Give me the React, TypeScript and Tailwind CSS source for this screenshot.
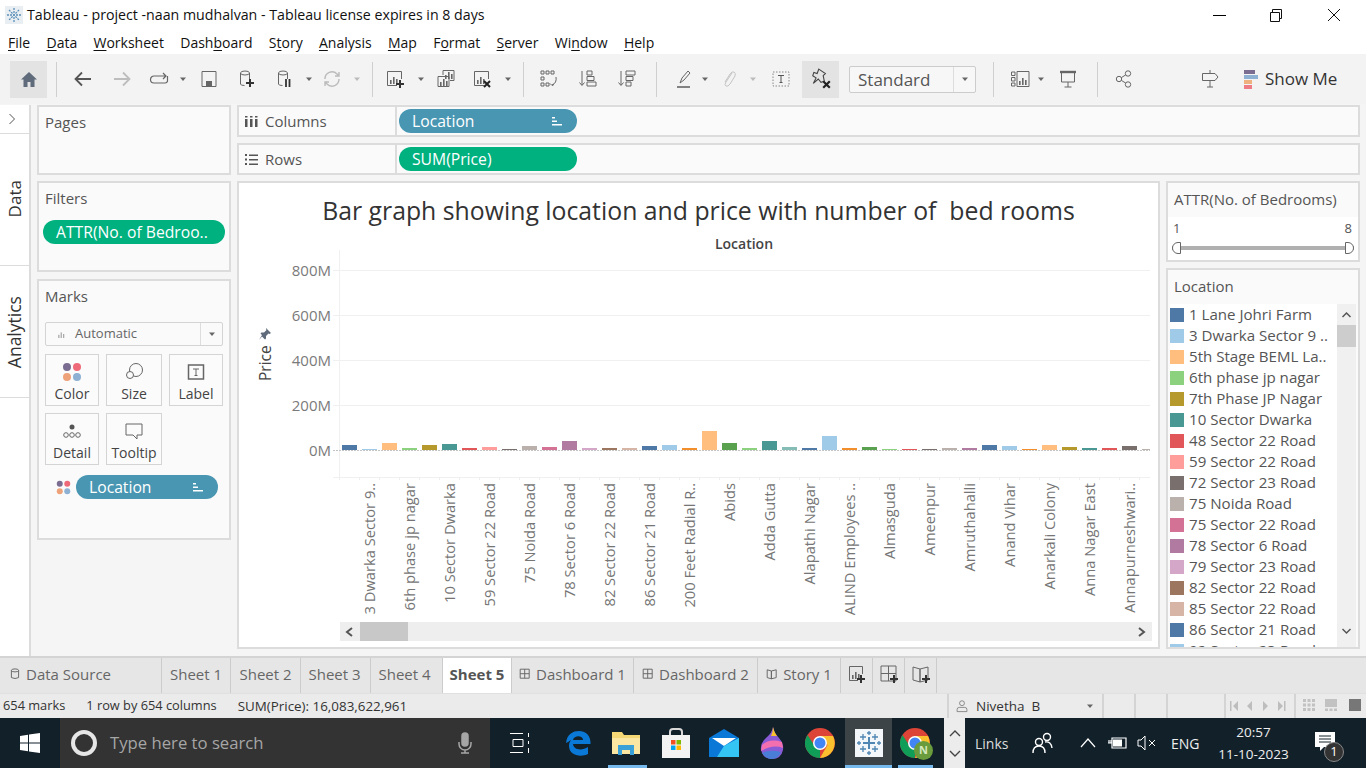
import type { ReactNode } from 'react';

const GREY = '#666666';

const Svg = ({ children, size = 20, className = '' }: { children: ReactNode; size?: number; className?: string }) => (
    <svg width={size} height={size} viewBox="0 0 20 20" fill="none" stroke={GREY} strokeWidth="1" className={`shrink-0 ${className}`}>
        {children}
    </svg>
);

const Caret = ({ className, light }: { className: string; light?: boolean }) => (
    <svg width="8" height="8" viewBox="0 0 8 8" className={`shrink-0 ${className}`}>
        <path d="M1 2.500h6L4 6z" fill={light ? '#bbbbbb' : '#666666'} />
    </svg>
);

const Sep = ({ className }: { className: string }) => <div className={`h-[35px] w-px shrink-0 bg-[#cfcfcf] ${className}`} />;

const MiniBars = ({ x = 4, y = 4, color = GREY }: { x?: number; y?: number; color?: string }) => (
    <g fill={color} stroke="none" transform={`translate(${x} ${y})`}>
        <rect x="0" y="6" width="1.600" height="4" />
        <rect x="3" y="3" width="1.600" height="7" />
        <rect x="6" y="5" width="1.600" height="5" />
    </g>
);

const PlusMark = ({ x, y }: { x: number; y: number }) => (
    <path d={`M${x - 4} ${y}h8M${x} ${y - 4}v8`} stroke="#333333" strokeWidth="2" />
);

const XMark = ({ x, y }: { x: number; y: number }) => (
    <path d={`M${x - 3} ${y - 3}l6 6M${x + 3} ${y - 3}l-6 6`} stroke="#222222" strokeWidth="2" />
);

const Cylinder = () => (
    <>
        <ellipse cx="8" cy="4" rx="4.500" ry="2" />
        <path d="M3.500 4v11q0 1.500 4 1.500M12.500 4v6" />
    </>
);

const menus: [string, string, string][] = [
    ['', 'F', 'ile'],
    ['', 'D', 'ata'],
    ['', 'W', 'orksheet'],
    ['Dash', 'b', 'oard'],
    ['S', 't', 'ory'],
    ['', 'A', 'nalysis'],
    ['', 'M', 'ap'],
    ['F', 'o', 'rmat'],
    ['', 'S', 'erver'],
    ['Wi', 'n', 'dow'],
    ['', 'H', 'elp'],
];

const TitleBar = () => (
    <div className="flex h-[30px] items-center bg-white">
        <svg width="18" height="18" viewBox="0 0 18 18" className="ml-[5px]">
            <rect width="18" height="18" fill="#e8eef2" />
            <path d="M9 2v14M2 9h14M4 4l10 10M14 4L4 14" stroke="#5b8fb9" strokeWidth="1.300" strokeDasharray="2 1" />
        </svg>
        <div className="ml-[4px] text-[14.200px] text-[#111111]">Tableau - project -naan mudhalvan - Tableau license expires in 8 days</div>
        <div className="ml-auto flex items-center">
            <div className="h-px w-[13px] bg-black" />
            <svg width="14" height="14" viewBox="0 0 14 14" fill="none" stroke="#111111" className="ml-[43px]">
                <path d="M1.500 4.500h9v9h-9zM3.500 4.500v-3h9v9h-2" />
            </svg>
            <svg width="14" height="14" viewBox="0 0 14 14" fill="none" stroke="#111111" className="ml-[44px] mr-[25px]">
                <path d="M1 1l12 12M13 1L1 13" />
            </svg>
        </div>
    </div>
);

const MenuBar = () => (
    <div className="flex h-[24px] items-center gap-[16.300px] bg-white pl-[8px] text-[14px] text-[#111111]">
        {menus.map(([a, u, b]) => (
            <span key={a + u + b}>
                {a}
                <span className="underline underline-offset-2">{u}</span>
                {b}
            </span>
        ))}
    </div>
);

const Toolbar = () => (
    <div className="flex h-[50px] items-center bg-[#f3f3f3] pl-[10px]">
        <div className="flex h-[37px] w-[37px] shrink-0 items-center justify-center bg-[#e3e3e3]">
            <svg width="18" height="17" viewBox="0 0 18 17"><path d="M9 1L1 8.500h2.500V16h4v-5h3v5h4V8.500H17z" fill="#5f6b7a" /></svg>
        </div>
        <Sep className="ml-[9px]" />
        <Svg className="ml-[16px]"><path d="M18 10H3M9 3.500L2.500 10 9 16.500" strokeWidth="1.800" stroke="#555555" /></Svg>
        <Svg className="ml-[19px]"><path d="M2 10h15M11 3.500l6.500 6.500-6.500 6.500" strokeWidth="1.800" stroke="#bdbdbd" /></Svg>
        <Svg className="ml-[17px]"><path d="M17 7H5a3.500 3.500 0 0 0 0 7h11a2.500 2.500 0 0 0 2.500-3V7M14 4l3 3-3 3" strokeWidth="1.200" /></Svg>
        <Caret className="ml-[10px]" />
        <Svg className="ml-[12px]"><path d="M3 2.500h14v15H3z" /><rect x="7" y="12" width="6" height="5" fill={GREY} stroke="none" /></Svg>
        <Svg className="ml-[18px]"><Cylinder /><PlusMark x={13} y={14} /></Svg>
        <Svg className="ml-[18px]"><Cylinder /><path d="M11 10v8M14.500 10v8" stroke="#333333" strokeWidth="1.800" /></Svg>
        <Caret className="ml-[10px]" />
        <Svg className="ml-[9px]"><g stroke="#bbbbbb" strokeWidth="1.400"><path d="M3 10a7 7 0 0 1 12-5l2 2M17 10a7 7 0 0 1-12 5l-2-2M17 3v4h-4M3 17v-4h4" /></g></Svg>
        <Caret light className="ml-[11px]" />
        <Sep className="ml-[11px]" />
        <Svg className="ml-[13px]"><path d="M11 16.500H1.500v-14h14V10" /><MiniBars x={4} y={5} /><PlusMark x={14} y={15} /></Svg>
        <Caret className="ml-[11px]" />
        <Svg className="ml-[11px]"><path d="M7 6V1.500h11v10h-4" /><path d="M2 7.500h11v10H2z" /><MiniBars x={4} y={7} /><MiniBars x={9} y={0} /></Svg>
        <Svg className="ml-[17px]"><path d="M11 16.500H1.500v-14h14V10" /><MiniBars x={4} y={5} /><XMark x={14} y={15} /></Svg>
        <Caret className="ml-[11px]" />
        <Sep className="ml-[11px]" />
        <Svg className="ml-[15px]"><path d="M2 2h3v3H2zM7 2h3v3H7zM12 2h3v3h-3zM2 8h3v3H2zM2 14h3v3H2zM7 14h3v3H7z" /><path d="M17 8q1 6-4 8M11 14.500l2 2 2-1" /></Svg>
        <Svg className="ml-[19px]"><path d="M4 2v14M1.500 13.500L4 16.500l2.500-3" /><path d="M9 2h5v4H9zM9 7.500h7v4H9zM9 13h9v4H9z" /></Svg>
        <Svg className="ml-[19px]"><path d="M4 2v14M1.500 13.500L4 16.500l2.500-3" /><path d="M9 2h9v4H9zM9 7.500h7v4H9zM9 13h5v4H9z" /></Svg>
        <Sep className="ml-[19px]" />
        <Svg className="ml-[17px]"><path d="M6 14l2-5 6-7 2 2-6 7z" /><path d="M3 18h13" strokeWidth="1.600" /></Svg>
        <Caret className="ml-[7px]" />
        <Svg className="ml-[10px]"><path d="M13 4l-6 9q-2 3 0 4t4-2l5-8q1-3-1-4t-4 2l-5 8" stroke="#c4c4c4" /></Svg>
        <Caret light className="ml-[10px]" />
        <Svg className="ml-[14px]"><path d="M2 3h16v14H2z" strokeDasharray="1.500 1.500" stroke="#888888" /><path d="M7 6.500h6M10 6.500v7M8.500 13.500h3" stroke="#555555" /></Svg>
        <div className="ml-[11px] flex h-[37px] w-[37px] shrink-0 items-center justify-center bg-[#e3e3e3]">
            <Svg size={22}><path d="M8 1l6 4-2 2 1 5-3 1-2.500-3L3 14l2.500-5-3-2 1-3 3 1z" stroke="#444444" /><XMark x={15} y={15} /></Svg>
        </div>
        <div className="ml-[10px] flex h-[27px] w-[127px] shrink-0 items-center rounded-[2px] border border-[#cccccc] bg-[#f7f7f7] pl-[8px] text-[17px] text-[#555555]">
            <span className="flex-1 pt-px">Standard</span>
            <div className="flex h-full w-[22px] items-center justify-center border-l border-[#dddddd]"><Caret className="" /></div>
        </div>
        <Sep className="ml-[17px]" />
        <Svg className="ml-[16px]"><path d="M1.500 3h3.500v3.500H1.500zM1.500 8.500h3.500V12H1.500zM1.500 14h3.500v3H1.500zM7 2.500h12v15H7z" /><MiniBars x={9} y={6} /></Svg>
        <Caret className="ml-[7px]" />
        <Svg className="ml-[13px]"><path d="M2 3h16" strokeWidth="2.400" /><path d="M3.500 4v9h13V4M10 13v5M6.500 18h7" /></Svg>
        <Sep className="ml-[19px]" />
        <Svg className="ml-[16px]"><circle cx="14" cy="4.500" r="2.700" /><circle cx="5" cy="10" r="2.700" /><circle cx="14" cy="15.500" r="2.700" /><path d="M7.400 8.600l4.300-2.700M7.400 11.400l4.300 2.700" /></Svg>
        <Svg className="ml-[66px]"><path d="M10 1v3M2.500 4.500H15l3 3.500-3 3.500H2.500zM10 11.500V18M7 18h6" /></Svg>
        <div className="ml-[24px] flex w-[14px] shrink-0 flex-col">
            <div className="h-[4px] w-[11px] bg-[#7b6c91]" />
            <div className="mt-[1px] h-[4px] w-[14px] bg-[#8db0d3]" />
            <div className="mt-[1px] h-[4px] w-[8px] bg-[#eeb07e]" />
            <div className="mt-[1px] h-[4px] w-[8px] bg-[#ee7c86]" />
        </div>
        <div className="ml-[7px] whitespace-nowrap text-[17px] text-[#333333]">Show Me</div>
    </div>
);

const Panel = ({ title, className, children }: { title: string; className: string; children?: ReactNode }) => (
    <div className={`shrink-0 border-2 border-[#dcdcdc] bg-[#fafafa] ${className}`}>
        <div className="pl-[6px] pt-[5px] text-[15px] leading-[20px] text-[#555555]">{title}</div>
        {children}
    </div>
);

const SortMark = () => (
    <svg width="10" height="10" viewBox="0 0 10 10" className="shrink-0">
        <path d="M0 1h3v1.500H0zM0 4.500h5V6H0zM0 8h10v1.500H0z" fill="#ffffff" />
    </svg>
);

const Pill = ({ label, className, sort }: { label: string; className: string; sort?: boolean }) => (
    <div className={`flex h-[24px] shrink-0 items-center rounded-full pl-[13px] pr-[15px] text-[15.700px] text-white ${className}`}>
        <span className="flex-1 whitespace-nowrap pt-[2px]">{label}</span>
        {sort && <SortMark />}
    </div>
);

const MarkCard = ({ label, icon, className }: { label: string; icon: ReactNode; className: string }) => (
    <div className={`flex h-[52px] flex-col items-center border border-[#d4d4d4] bg-[#fbfbfb] pt-[7px] text-[14px] text-[#444444] ${className}`}>
        <div className="flex h-[20px] items-center">{icon}</div>
        <div className="mt-[3px] leading-[18px]">{label}</div>
    </div>
);

const ColorDots = ({ size = 20 }: { size?: number }) => (
    <svg width={size} height={size} viewBox="0 0 20 20">
        <circle cx="5" cy="5" r="4" fill="#7b6c91" />
        <circle cx="15" cy="5" r="4" fill="#ee6a78" />
        <circle cx="5" cy="15" r="4" fill="#eea27a" />
        <circle cx="15" cy="15" r="4" fill="#8db0d3" />
    </svg>
);

const Rail = () => (
    <div className="flex w-[31px] shrink-0 flex-col border-r-2 border-[#dcdcdc] bg-white text-[#333333]">
        <div className="flex h-[29px] items-center justify-start border-b border-[#dcdcdc] pl-[8px]">
            <svg width="8" height="12" viewBox="0 0 8 12" fill="none" stroke="#555555"><path d="M1.500 1l5 5-5 5" /></svg>
        </div>
        <div className="flex h-[132px] items-center justify-center border-b border-[#dcdcdc] pb-[2px]">
            <span className="-rotate-90 whitespace-nowrap text-[17px]">Data</span>
        </div>
        <div className="flex h-[132px] items-center justify-center border-b border-[#dcdcdc] pt-[2px]">
            <span className="-rotate-90 whitespace-nowrap text-[17.500px]">Analytics</span>
        </div>
    </div>
);

const LeftPanels = () => (
    <div className="ml-[6px] flex w-[194px] shrink-0 flex-col">
        <Panel title="Pages" className="h-[70px]" />
        <Panel title="Filters" className="mt-[6px] h-[91px]">
            <Pill label="ATTR(No. of Bedroo.." className="ml-[4px] mt-[12px] w-[182px] bg-[#00b180]" />
        </Panel>
        <Panel title="Marks" className="mt-[7px] h-[261px]">
            <div className="ml-[6px] mt-[16px] flex h-[24px] w-[178px] items-center rounded-[2px] border border-[#d4d4d4] text-[13px] text-[#666666]">
                <Svg size={16} className="ml-[9px]"><MiniBars x={4} y={5} color="#aaaaaa" /></Svg>
                <span className="ml-[4px] flex-1">Automatic</span>
                <div className="flex h-full w-[22px] items-center justify-center border-l border-[#dddddd]"><Caret className="" /></div>
            </div>
            <div className="ml-[6px] mt-[8px] flex gap-[7px]">
                <MarkCard label="Color" className="w-[54px]" icon={<ColorDots />} />
                <MarkCard label="Size" className="w-[56px]" icon={<Svg size={20}><circle cx="12" cy="8" r="6.500" /><circle cx="6" cy="13" r="3.500" fill="#fbfbfb" /></Svg>} />
                <MarkCard label="Label" className="w-[54px]" icon={<Svg size={20}><rect x="2.500" y="3" width="15" height="14" strokeWidth="1.500" /><path d="M7 7h6M10 7v6.500M8.500 13.500h3" /></Svg>} />
            </div>
            <div className="ml-[6px] mt-[7px] flex gap-[7px]">
                <MarkCard label="Detail" className="w-[54px]" icon={<Svg size={20}><circle cx="10" cy="6" r="2.500" fill="#555555" stroke="none" /><circle cx="4" cy="14" r="2.300" /><circle cx="10" cy="14" r="2.300" /><circle cx="16" cy="14" r="2.300" /></Svg>} />
                <MarkCard label="Tooltip" className="w-[56px]" icon={<Svg size={20}><path d="M2 3h16v11h-5v4l-4-4H2z" /></Svg>} />
            </div>
            <div className="ml-[17px] mt-[10px] flex items-center">
                <ColorDots size={15} />
                <Pill label="Location" className="ml-[5px] w-[142px] bg-[#4996b2]" sort />
            </div>
        </Panel>
    </div>
);

const Shelf = ({ label, icon, pill, className }: { label: string; icon: ReactNode; pill: ReactNode; className: string }) => (
    <div className={`mr-[6px] flex h-[32px] items-center border-2 border-[#dcdcdc] bg-[#fafafa] ${className}`}>
        <div className="flex h-full w-[158px] shrink-0 items-center border-r-2 border-[#dcdcdc] pl-[6px] text-[15px] text-[#555555]">
            <div className="flex w-[20px] items-center">{icon}</div>
            {label}
        </div>
        <div className="ml-[2px]">{pill}</div>
    </div>
);

const labels = [
    '3 Dwarka Sector 9..', '6th phase jp nagar', '10 Sector Dwarka', '59 Sector 22 Road', '75 Noida Road',
    '78 Sector 6 Road', '82 Sector 22 Road', '86 Sector 21 Road', '200 Feet Radial R..', 'Abids',
    'Adda Gutta', 'Alapathi Nagar', 'ALIND Employees ..', 'Almasguda', 'Ameenpur',
    'Amruthahalli', 'Anand Vihar', 'Anarkali Colony', 'Anna Nagar East', 'Annapurneshwari..',
];

const bars: [string, number][] = [
    ['#4e79a7', 5], ['#a0cbe8', 1], ['#ffbe7d', 7], ['#8cd17d', 2], ['#b6992d', 5], ['#499894', 6], ['#e15759', 2], ['#ff9d9a', 3],
    ['#79706e', 1], ['#bab0ac', 4], ['#d37295', 3], ['#b07aa1', 9], ['#d4a6c8', 2], ['#9d7660', 2], ['#d7b5a6', 2], ['#4e79a7', 4],
    ['#a0cbe8', 5], ['#f28e2b', 2], ['#ffbe7d', 19], ['#59a14f', 7], ['#8cd17d', 2], ['#499894', 9], ['#86bcb6', 3], ['#4e79a7', 2],
    ['#a0cbe8', 14], ['#f28e2b', 2], ['#59a14f', 3], ['#8cd17d', 1], ['#e15759', 1], ['#79706e', 1], ['#bab0ac', 2], ['#b07aa1', 2],
    ['#4e79a7', 5], ['#a0cbe8', 4], ['#f28e2b', 1], ['#ffbe7d', 5], ['#b6992d', 3], ['#499894', 2], ['#e15759', 2], ['#79706e', 4],
    ['#bab0ac', 1],
];

const Chart = () => (
    <svg width="919" height="392" viewBox="239 230 919 392" className="block shrink-0" fontSize="14.700">
        <text x="744" y="249" textAnchor="middle" fontSize="14" fontWeight="600" fill="#444444">Location</text>
        {[270, 315, 360, 405, 477].map((y) => (
            <line key={y} x1="333" x2="1150" y1={y + 0.5} y2={y + 0.5} stroke="#f0f0f0" />
        ))}
        <line x1="339.500" x2="339.500" y1="250" y2="480" stroke="#f0f0f0" />
        {Array.from({ length: 41 }, (_, i) => (
            <line key={i} x1={339.500 + i * 20} x2={339.500 + i * 20} y1="477" y2="480" stroke="#eeeeee" />
        ))}
        {bars.map(([color, h], i) => (
            <rect key={i} x={342 + i * 20} y={450 - h} width={i === 40 ? 8 : 15} height={h} fill={color} />
        ))}
        <line x1="333" x2="1150" y1="450.500" y2="450.500" stroke="#c4c4c4" strokeDasharray="2 1" />
        {['800M', '600M', '400M', '200M', '0M'].map((t, i) => (
            <text key={t} x="331" y={275.500 + i * 45} textAnchor="end" fontSize="15" fill="#7a7a7a">{t}</text>
        ))}
        <text transform="rotate(-90 271 381)" x="271" y="381" fill="#444444" fontSize="15.500">Price</text>
        <path d="M266 328l5 5-1.500 1-1-.5-2.500 2.500 0 2.500-1 1-3-3-3 3.500 3-5-1.500-1.500 1-1h2.500l2.500-2.500-.5-1z" fill="#5f6b7a" />
        {labels.map((t, i) => (
            <text key={t} transform={`rotate(-90 ${375 + i * 40} 483)`} x={375 + i * 40} y="483" textAnchor="end" fill="#757575">{t}</text>
        ))}
    </svg>
);

const ChartPanel = () => (
    <div className="flex flex-1 flex-col border-2 border-[#dcdcdc] bg-white">
        <div className="mt-[10px] whitespace-pre text-center text-[24.800px] leading-[34px] text-[#333333]">Bar graph showing location and price with number of  bed rooms</div>
        <div className="mt-[3px]">
            <Chart />
        </div>
        <div className="ml-[101px] flex h-[19px] w-[812px] items-center bg-[#eeeeee]">
            <svg width="20" height="12" viewBox="0 0 20 12" fill="none" stroke="#555555" strokeWidth="2" className="shrink-0"><path d="M12 2L7 6l5 4" /></svg>
            <div className="h-full w-[48px] bg-[#c8c8c8]" />
            <svg width="20" height="12" viewBox="0 0 20 12" fill="none" stroke="#555555" strokeWidth="2" className="ml-auto shrink-0"><path d="M7 2l5 4-5 4" /></svg>
        </div>
    </div>
);

const legend: [string, string][] = [
    ['#4e79a7', '1 Lane Johri Farm'], ['#a0cbe8', '3 Dwarka Sector 9 ..'], ['#ffbe7d', '5th Stage BEML La..'], ['#8cd17d', '6th phase jp nagar'],
    ['#b6992d', '7th Phase JP Nagar'], ['#499894', '10 Sector Dwarka'], ['#e15759', '48 Sector 22 Road'], ['#ff9d9a', '59 Sector 22 Road'],
    ['#79706e', '72 Sector 23 Road'], ['#bab0ac', '75 Noida Road'], ['#d37295', '75 Sector 22 Road'], ['#b07aa1', '78 Sector 6 Road'],
    ['#d4a6c8', '79 Sector 23 Road'], ['#9d7660', '82 Sector 22 Road'], ['#d7b5a6', '85 Sector 22 Road'], ['#4e79a7', '86 Sector 21 Road'],
    ['#a0cbe8', '92 Sector 23 Road'],
];

const RightPanels = () => (
    <div className="ml-[6px] mr-[6px] flex w-[194px] shrink-0 flex-col">
        <div className="h-[81px] border-2 border-[#dcdcdc] bg-[#fafafa]">
            <div className="h-[34px] pl-[6px] pt-[6px] text-[15px] leading-[20px] text-[#555555]">ATTR(No. of Bedrooms)</div>
            <div className="h-[43px] bg-white px-[4px] pt-[3px]">
                <div className="flex justify-between pl-[1px] pr-[2px] text-[13px] leading-[16px] text-[#555555]"><span>1</span><span>8</span></div>
                <div className="relative mt-[10px] h-[4px] bg-[#b0b0b0]">
                    <div className="absolute left-0 top-[-4px] h-[12px] w-[9px] rounded-l-full border border-[#666666] bg-white" />
                    <div className="absolute right-0 top-[-4px] h-[12px] w-[9px] rounded-r-full border border-[#666666] bg-white" />
                </div>
            </div>
        </div>
        <div className="mt-[6px] h-[381px] border-2 border-[#dcdcdc] bg-[#fafafa]">
            <div className="h-[34px] pl-[6px] pt-[6px] text-[15px] leading-[20px] text-[#555555]">Location</div>
            <div className="mx-[2px] flex h-[343px] overflow-hidden bg-white">
                <div className="flex-1 overflow-hidden">
                    {legend.map(([color, name]) => (
                        <div key={name} className="flex h-[21px] items-center text-[15.100px] text-[#555555]">
                            <div className="h-[14px] w-[14px] shrink-0" style={{ backgroundColor: color }} />
                            <span className="ml-[5px] whitespace-nowrap">{name}</span>
                        </div>
                    ))}
                </div>
                <div className="flex w-[19px] shrink-0 flex-col items-center bg-[#f0f0f0]">
                    <svg width="11" height="21" viewBox="0 0 11 21" fill="none" stroke="#555555" strokeWidth="1.500" className="shrink-0"><path d="M1.500 13l4-4 4 4" /></svg>
                    <div className="h-[22px] w-full bg-[#cdcdcd]" />
                    <svg width="11" height="21" viewBox="0 0 11 21" fill="none" stroke="#555555" strokeWidth="1.500" className="mt-auto mb-[5px] shrink-0"><path d="M1.500 8l4 4 4-4" /></svg>
                </div>
            </div>
        </div>
    </div>
);

const Tab = ({ label, w, icon, active, className = '' }: { label?: string; w: string; icon?: ReactNode; active?: boolean; className?: string }) => (
    <div className={`flex h-full shrink-0 items-center justify-center gap-[5px] border-r border-[#cccccc] pb-[3px] text-[15px] ${active ? 'bg-white font-bold text-[#555555]' : 'text-[#666666]'} ${w} ${className}`}>
        {icon}
        {label && <span className="whitespace-nowrap">{label}</span>}
    </div>
);

const DashIcon = ({ plus }: { plus?: boolean }) => (
    <Svg size={plus ? 20 : 12}><path d="M2 2h15v15H2zM9.500 2v15M2 9.500h15" strokeWidth={plus ? 1 : 1.600} />{plus && <PlusMark x={15} y={15} />}</Svg>
);
const BookIcon = ({ plus }: { plus?: boolean }) => (
    <Svg size={plus ? 20 : 12}><path d="M2 3l7 2v13l-7-2zM9 5l8-2v13l-8 2z" strokeWidth={plus ? 1 : 1.600} />{plus && <PlusMark x={15} y={15} />}</Svg>
);

const Tabs = () => (
    <div className="flex h-[37px] shrink-0 border-t-2 border-[#d4d4d4] bg-[#e6e6e6]">
        <Tab w="w-[162px]" className="justify-start gap-[4px] pl-[9px]" label="Data Source" icon={<Svg size={12}><ellipse cx="10" cy="4" rx="6" ry="2.500" strokeWidth="1.600" /><path d="M4 4v12q6 3 12 0V4" strokeWidth="1.600" /></Svg>} />
        <Tab w="w-[69px]" label="Sheet 1" />
        <Tab w="w-[70px]" label="Sheet 2" />
        <Tab w="w-[70px]" className="pr-[2px]" label="Sheet 3" />
        <Tab w="w-[72px]" className="pr-[4px]" label="Sheet 4" />
        <Tab w="w-[69px]" label="Sheet 5" active />
        <Tab w="w-[122px]" label="Dashboard 1" icon={<DashIcon />} />
        <Tab w="w-[124px]" label="Dashboard 2" icon={<DashIcon />} />
        <Tab w="w-[83px]" label="Story 1" icon={<BookIcon />} />
        <Tab w="w-[32px]" icon={<Svg><path d="M11 16.500H2.500v-14h13V10" /><MiniBars x={5} y={5} /><PlusMark x={14} y={15} /></Svg>} />
        <Tab w="w-[32px]" icon={<DashIcon plus />} />
        <Tab w="w-[32px]" icon={<BookIcon plus />} />
    </div>
);

const NavArrows = () => (
    <svg width="60" height="10" viewBox="0 0 60 10" fill="#bdbdbd" className="shrink-0">
        <path d="M0 0h1.500v10H0zM8 0v10L3 5zM22 0v10l-5-5zM33 0l5 5-5 5zM48 0l5 5-5 5zM54 0h1.500v10H54z" />
    </svg>
);

const StatusBar = () => (
    <div className="flex h-[25px] shrink-0 items-center whitespace-nowrap border-t border-[#e0e0e0] bg-[#ebebeb] text-[12.800px] text-[#333333]">
        <span className="ml-[3px]">654 marks</span>
        <span className="ml-[21px]">1 row by 654 columns</span>
        <span className="ml-[21px] text-[13.400px]">SUM(Price): 16,083,622,961</span>
        <div className="ml-auto flex h-full w-[157px] shrink-0 items-center border-x-2 border-[#d4d4d4] pl-[6px] text-[13.500px]">
            <Svg size={14}><circle cx="10" cy="6" r="3.500" /><path d="M3 18v-3q0-3 3-3h8q3 0 3 3v3z" /></Svg>
            <span className="ml-[7px] flex-1 whitespace-pre">Nivetha  B</span>
            <Caret className="mr-[8px]" />
        </div>
        <div className="h-full w-[32px] shrink-0 border-r-2 border-[#d4d4d4]" />
        <div className="h-full w-[32px] shrink-0 border-r-2 border-[#d4d4d4]" />
        <div className="flex h-full w-[58px] shrink-0 border-r-2 border-[#d4d4d4]" />
        <div className="flex h-full w-[70px] shrink-0 items-center justify-center border-r-2 border-[#d4d4d4]"><NavArrows /></div>
        <svg width="60" height="14" viewBox="0 0 60 14" className="ml-[7px] mr-[3px] shrink-0" fill="#c2c2c2">
            <path d="M0 0h3v3H0zM4.500 0h3v3h-3zM9 0h3v3H9zM0 4.500h3v3H0zM4.500 4.500h3v3h-3zM9 4.500h3v3H9zM0 9h3v3H0zM4.500 9h3v3h-3zM9 9h3v3H9z" />
            <path d="M22 0h12v8H22zM22 9.500h3V12h-3zM26.500 9.500h3V12h-3zM31 9.500h3V12h-3z" />
            <rect x="46" y="0" width="12" height="12" fill="#777777" />
        </svg>
    </div>
);

const TaskApp = ({ children, active, wide, className = '' }: { children: ReactNode; active?: boolean; wide?: boolean; className?: string }) => (
    <div className={`relative flex h-full shrink-0 items-center justify-center ${wide ? 'w-[47px] bg-[#3c4448]' : 'w-[48px]'} ${className}`}>
        {children}
        {active && <div className={`absolute bottom-0 h-[3px] bg-[#76b9ed] ${wide ? 'left-0 right-0' : 'left-[6px] right-[3px]'}`} />}
    </div>
);

const Chrome = ({ size = 30 }: { size?: number }) => (
    <svg width={size} height={size} viewBox="0 0 30 30">
        <circle cx="15" cy="15" r="15" fill="#db4437" />
        <path d="M15 8h13a15 15 0 0 1-13 22l7.500-13z" fill="#fbc02d" />
        <path d="M2 22.500A15 15 0 0 1 2.500 7L9 17l6 0-0 13a15 15 0 0 1-13-7.500z" fill="#0f9d58" />
        <circle cx="15" cy="15" r="7" fill="#ffffff" />
        <circle cx="15" cy="15" r="5.500" fill="#4285f4" />
    </svg>
);

const Taskbar = () => (
    <div className="flex h-[50px] shrink-0 items-center bg-[#12202a] text-white">
        <div className="flex w-[60px] shrink-0 justify-center">
            <svg width="20" height="20" viewBox="0 0 20 20" fill="#ffffff"><path d="M0 3l8-1.200v7.700H0zM9 1.600L20 0v9.500H9zM0 10.500h8v7.700L0 17zM9 10.500h11V20L9 18.400z" /></svg>
        </div>
        <div className="flex h-full w-[430px] shrink-0 items-center bg-[#333333] pl-[11px]">
            <div className="h-[26px] w-[26px] rounded-full border-[4px] border-[#e6e6e6]" />
            <span className="ml-[13px] text-[16.700px] text-[#a6a6a6]">Type here to search</span>
            <svg width="16" height="24" viewBox="0 0 16 24" fill="none" stroke="#a6a6a6" strokeWidth="1.500" className="ml-auto mr-[17px]">
                <rect x="5" y="2" width="6" height="13" rx="3" fill="#a6a6a6" />
                <path d="M2 11v2a6 6 0 0 0 12 0v-2M8 19v3M4 22h8" />
            </svg>
        </div>
        <div className="ml-[20px] flex h-full items-center">
            <svg width="20" height="20" viewBox="0 0 20 20" fill="none" stroke="#ffffff" className="shrink-0">
                <path d="M0 .5h13M3 6.500h10v7H3zM0 19.500h13M18.500 0v4M18.500 8v3M18.500 15v5" />
            </svg>
            <div className="ml-[24px] flex h-full items-center">
                <TaskApp>
                    <svg width="28" height="28" viewBox="0 0 28 28"><path d="M2 14C3 5 9 2 15 2c8 0 12 6 11.500 13H9c.5 6 9 7 15 3v7c-7 3.500-19 2-19-8.500 0-3 1.500-5.500 4-7C7 11 5 12.500 2 14zM9 11h10c0-5-9-5-10 0z" fill="#0a78d7" /></svg>
                </TaskApp>
                <TaskApp active>
                    <svg width="28" height="26" viewBox="0 0 28 26"><path d="M0 2h10l2 3h16v19H0z" fill="#f6d776" /><path d="M0 8h28v16H0z" fill="#fbe7a2" /><path d="M6 15h16v10h-4v-5h-8v5H6z" fill="#3aa0d8" /></svg>
                </TaskApp>
                <TaskApp className="ml-[2px]">
                    <svg width="28" height="30" viewBox="0 0 28 30"><path d="M8 8V4q0-3 3-3h6q3 0 3 3v4" fill="none" stroke="#d9d9d9" strokeWidth="2" /><path d="M0 7h28v23H0z" fill="#f3f3f3" /><path d="M9 12h4.500v4.500H9z" fill="#f25022" /><path d="M14.500 12H19v4.500h-4.500z" fill="#7fba00" /><path d="M9 17.500h4.500V22H9z" fill="#00a4ef" /><path d="M14.500 17.500H19V22h-4.500z" fill="#ffb900" /></svg>
                </TaskApp>
                <TaskApp>
                    <svg width="30" height="28" viewBox="0 0 30 28"><path d="M0 9L15 0l15 9v19H0z" fill="#0a78d7" /><path d="M3 9h24l-12 8z" fill="#ffffff" /><path d="M15 17L30 9v19H8z" fill="#35c5f5" /></svg>
                </TaskApp>
                <TaskApp>
                    <svg width="24" height="32" viewBox="0 0 24 32"><path d="M13 0q1 6 6 11 5 6 4 12-2 9-11 9T1 23q-1-7 5-12 6-5 7-11z" fill="#8a5bd6" /><path d="M2 18q8-7 20-3l1 6q-10-4-22 3z" fill="#f46fb0" /><path d="M13 0q1 5 4 9l-6 0q2-4 2-9z" fill="#fbc02d" /><path d="M2 26q8-4 19-1-3 7-9 7-6 0-10-6z" fill="#4a7dd8" /></svg>
                </TaskApp>
                <TaskApp><Chrome /></TaskApp>
                <TaskApp active wide className="ml-[1px]">
                    <div className="flex h-[28px] w-[28px] items-center justify-center bg-[#f4f7f9]">
                        <svg width="24" height="24" viewBox="0 0 24 24" fill="none" stroke="#4f86b3" strokeWidth="1.300">
                            <path d="M12 6v12M6 12h12" strokeWidth="2" />
                            <path d="M6 3v6M3 6h6M18 3v6M15 6h6M6 15v6M3 18h6M18 15v6M15 18h6M12 0v4M10 2h4M12 20v4M10 22h4M0 12h4M2 10v4M20 12h4M22 10v4" />
                        </svg>
                    </div>
                </TaskApp>
                <div className="relative ml-[6px] flex h-full w-[35px] shrink-0 items-center justify-start pl-[2px]">
                    <Chrome />
                    <div className="absolute bottom-[8px] right-0 flex h-[19px] w-[19px] items-center justify-center rounded-full bg-[#6a9b3c] text-[11px] font-bold text-[#d7e8c0]">N</div>
                    <div className="absolute bottom-0 left-0 right-0 h-[3px] bg-[#76b9ed]" />
                </div>
            </div>
        </div>
        <div className="ml-[11px] flex h-full w-[21px] shrink-0 flex-col items-center justify-around bg-[#ececec] py-[4px]">
            <svg width="12" height="8" viewBox="0 0 12 8" fill="none" stroke="#444444" strokeWidth="1.400"><path d="M1 7l5-5 5 5" /></svg>
            <svg width="12" height="8" viewBox="0 0 12 8" fill="none" stroke="#444444" strokeWidth="1.400"><path d="M1 1l5 5 5-5" /></svg>
        </div>
        <span className="ml-[10px] w-[33px] shrink-0 text-[14px] text-[#dddddd]">Links</span>
        <svg width="22" height="22" viewBox="0 0 22 22" fill="none" stroke="#ffffff" strokeWidth="1.400" className="ml-[24px] shrink-0">
            <circle cx="15" cy="5" r="3.500" /><circle cx="7" cy="10" r="3.500" /><path d="M1 21q0-7 6-7t6 7M13 10q6-1 7 6" />
        </svg>
        <svg width="16" height="10" viewBox="0 0 16 10" fill="none" stroke="#ffffff" strokeWidth="1.200" className="ml-[26px] shrink-0"><path d="M1 9l7-8 7 8" /></svg>
        <svg width="20" height="14" viewBox="0 0 20 14" fill="none" stroke="#ffffff" strokeWidth="1.200" className="ml-[12px] shrink-0">
            <path d="M4 2h14v10H4z" /><rect x="5" y="3.500" width="9" height="7" fill="#ffffff" stroke="none" /><path d="M0 7h4M1 4v3M3 4v3" />
        </svg>
        <svg width="20" height="16" viewBox="0 0 20 16" fill="none" stroke="#ffffff" strokeWidth="1" className="ml-[9px] shrink-0">
            <path d="M1 5h3l4-4v14l-4-4H1zM12 5l6 6M18 5l-6 6" />
        </svg>
        <span className="ml-[14px] w-[29px] shrink-0 text-[14px] text-[#eeeeee]">ENG</span>
        <div className="ml-[15px] flex w-[77px] shrink-0 flex-col items-center text-[13.500px] leading-[22px] text-[#eeeeee]">
            <span>20:57</span>
            <span className="whitespace-nowrap">11-10-2023</span>
        </div>
        <div className="relative ml-[23px] h-[24px] w-[22px] shrink-0">
            <svg width="20" height="22" viewBox="0 0 20 22" fill="#ffffff"><path d="M0 1h20v15H9l-4 4v-4H0z" /><path d="M4 5h12M4 8h12M4 11h12" stroke="#14222b" /></svg>
            <div className="absolute left-[9px] top-[11px] flex h-[20px] w-[20px] items-center justify-center rounded-full border border-[#888888] bg-[#333333] text-[13px]">1</div>
        </div>
    </div>
);

export default function App() {
    return (
        <div className="flex h-[768px] w-[1366px] flex-col overflow-hidden bg-[#f5f5f5] font-['Open_Sans',sans-serif]">
            <TitleBar />
            <MenuBar />
            <Toolbar />
            <div className="flex h-[552px] shrink-0 pt-px">
                <Rail />
                <LeftPanels />
                <div className="ml-[6px] flex min-w-0 flex-1 flex-col">
                    <Shelf
                        label="Columns"
                        className=""
                        icon={<svg width="13" height="11" viewBox="0 0 13 11" fill="#555555"><path d="M0 3h2.500v8H0zM5 3h2.500v8H5zM10 3h2.500v8H10zM0 0h2.500v1.500H0zM5 0h2.500v1.500H5zM10 0h2.500v1.500H10z" /></svg>}
                        pill={<Pill label="Location" className="w-[178px] bg-[#4996b2]" sort />}
                    />
                    <Shelf
                        label="Rows"
                        className="mt-[6px]"
                        icon={<svg width="13" height="11" viewBox="0 0 13 11" fill="#555555"><path d="M0 0h2v2H0zM4 .5h9V2H4zM0 4.500h2v2H0zM4 5h9v1.500H4zM0 9h2v2H0zM4 9.500h9V11H4z" /></svg>}
                        pill={<Pill label="SUM(Price)" className="w-[178px] bg-[#00b180]" />}
                    />
                    <div className="mt-[6px] flex h-[468px] min-h-0">
                        <ChartPanel />
                        <RightPanels />
                    </div>
                </div>
            </div>
            <Tabs />
            <StatusBar />
            <Taskbar />
        </div>
    );
}
